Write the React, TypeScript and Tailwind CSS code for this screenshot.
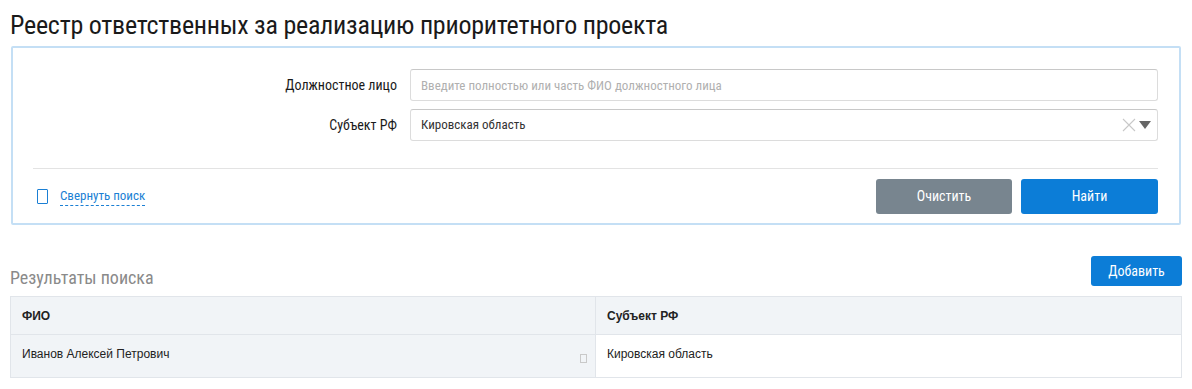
const narrow = "font-['Roboto_Condensed','Liberation_Sans_Narrow','Arial_Narrow','DejaVu_Sans_Condensed',Roboto,sans-serif]"

function CollapseIcon() {
  return <span className="inline-block h-[15px] w-[11px] rounded-[1px] border border-[#1a7fd4]" />
}

export default function App() {
  return (
    <div className={`min-h-screen bg-white px-[10px] pt-[10px] text-[#222] ${narrow}`}>
      {/* Title */}
      <h1 className="text-[26px] leading-[30px] tracking-[-0.25px] text-[#1a1a1a]">
        Реестр ответственных за реализацию приоритетного проекта
      </h1>

      {/* Search panel */}
      <div className="mt-[6px] mx-px rounded-[2px] border-2 border-[#c4dff5] pl-[20px] pr-[21px] pt-[21px] pb-[9px]">
        <div className="grid grid-cols-[364px_1fr] items-center gap-x-[13px] gap-y-[8px]">
          <label className="text-right text-[14px] text-[#1a1a1a]">Должностное лицо</label>
          <input
            className="h-[32px] w-full rounded-[3px] border border-[#dcdcdc] border-t-[#c8c8c8] px-[10px] text-[13px] text-[#333] outline-none placeholder:text-[#b0b0b0]"
            placeholder="Введите полностью или часть ФИО должностного лица"
          />
          <label className="text-right text-[14px] text-[#1a1a1a]">Субъект РФ</label>
          <div className="flex h-[32px] items-center rounded-[3px] border border-[#dcdcdc] border-t-[#c8c8c8] pl-[10px] pr-[6px] text-[13px] text-[#333]">
            <span className="flex-1">Кировская область</span>
            <svg width="14" height="14" viewBox="0 0 14 14" className="mr-[3px]">
              <path d="M1 1 L13 13 M13 1 L1 13" stroke="#c8c8c8" strokeWidth="1.1" />
            </svg>
            <svg width="12" height="10" viewBox="0 0 12 10">
              <path d="M0 1 H12 L6 9 Z" fill="#666" />
            </svg>
          </div>
        </div>

        <div className="mt-[27px] border-t border-[#e3e3e3]" />

        <div className="mt-[10px] flex items-center">
          <div className="ml-[4px] flex items-center gap-[12px]">
            <CollapseIcon />
            <span className="border-b border-dashed border-[#1a7fd4] pb-[1px] text-[13px] leading-[16px] text-[#1a7fd4]">
              Свернуть поиск
            </span>
          </div>
          <div className="ml-auto flex gap-[9px]">
            <button className="h-[35px] w-[136px] rounded-[3px] bg-[#78858f] text-[14px] text-white">
              Очистить
            </button>
            <button className="h-[35px] w-[137px] rounded-[3px] bg-[#0c7dd7] text-[14px] text-white">
              Найти
            </button>
          </div>
        </div>
      </div>

      {/* Results */}
      <div className="mt-[31px] flex items-end justify-between">
        <h2 className="mb-[-2px] text-[18px] leading-[20px] text-[#8a8a8a]">Результаты поиска</h2>
        <button className="h-[30px] w-[91px] rounded-[3px] bg-[#0c7dd7] text-[14px] text-white">
          Добавить
        </button>
      </div>

      <table className="mt-[10px] w-full border-collapse font-['Liberation_Sans',Arial,sans-serif] text-[12px] text-[#222]">
        <thead>
          <tr className="h-[38px] bg-[#f1f4f7]">
            <th className="w-[585px] border border-[#e1e5ea] px-[11px] text-left font-bold">ФИО</th>
            <th className="border border-[#e1e5ea] px-[11px] text-left font-bold">Субъект РФ</th>
          </tr>
        </thead>
        <tbody>
          <tr className="h-[43px]">
            <td className="border border-[#e1e5ea] bg-[#f1f4f7] px-[11px]">
              <div className="flex items-center justify-between">
                <span className="-mt-[5px]">Иванов Алексей Петрович</span>
                <span className="mt-[5px] mr-[-3px] inline-block h-[9px] w-[7px] border border-[#c9c9c9]" />
              </div>
            </td>
            <td className="border border-[#e1e5ea] bg-white px-[11px]">
              <span className="-mt-[5px] block">Кировская область</span>
            </td>
          </tr>
        </tbody>
      </table>
    </div>
  )
}
